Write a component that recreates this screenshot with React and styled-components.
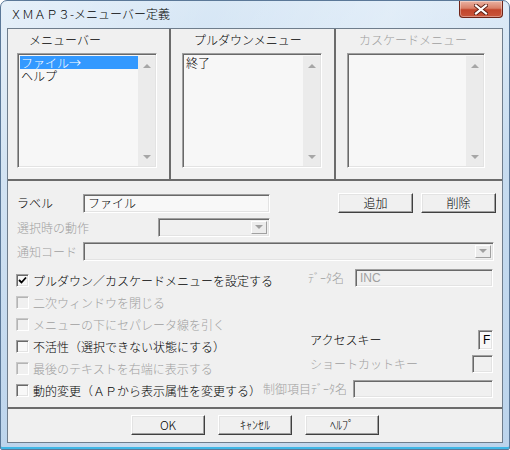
import React from 'react';
import styled, { createGlobalStyle } from 'styled-components';

const GlobalStyle = createGlobalStyle`
  html, body {
    margin: 0;
    padding: 0;
    background: #ffffff;
  }
  body {
    font-family: "Noto Sans CJK JP", "Noto Sans", sans-serif;
    font-size: 12px;
    font-weight: 300;
    color: #000;
  }
  * {
    box-sizing: border-box;
  }
`;

const Window = styled.div`
  width: 510px;
  height: 450px;
  display: flex;
  flex-direction: column;
  padding: 0 6px 6px 6px;
  border: 1px solid #5b7898;
  border-radius: 7px 7px 2px 2px;
  background:
    linear-gradient(115deg, rgba(255, 255, 255, 0.35) 0%, rgba(255, 255, 255, 0) 30%, rgba(255, 255, 255, 0.25) 55%, rgba(255, 255, 255, 0) 80%),
    linear-gradient(180deg, #d9e8f6 0%, #c6dbef 40%, #bcd4ec 100%);
  box-shadow: inset 0 -2px 0 #3fb7e6;
`;

const TitleBar = styled.div`
  height: 27px;
  display: flex;
  align-items: flex-start;
`;

const TitleText = styled.div`
  padding: 6px 0 0 3px;
  font-size: 12px;
  line-height: 14px;
  color: #000;
`;

const CloseButton = styled.div`
  margin-left: auto;
  width: 44px;
  height: 17px;
  display: flex;
  align-items: center;
  justify-content: center;
  border: 1px solid #6f2417;
  border-top: none;
  border-radius: 0 0 4px 4px;
  background: linear-gradient(180deg, #eab3a3 0%, #d98068 45%, #c2452b 55%, #c9553a 100%);
  box-shadow: inset 0 0 0 1px rgba(255, 255, 255, 0.35);
`;

const Client = styled.div`
  flex: 1;
  display: flex;
  flex-direction: column;
  border: 1px solid #6f7d8c;
  background: #f0f0f0;
`;

const ListSection = styled.div`
  height: 150px;
  display: grid;
  grid-template-columns: 161px 163px 166px;
  column-gap: 2px;
  background: #6b6b6b;
`;

const HDivider = styled.div`
  height: 2px;
  background: #6b6b6b;
`;

const ListColumn = styled.div`
  background: #f0f0f0;
  padding: 5px 0 0 ${(p) => p.$inset}px;
`;

const ColumnTitle = styled.div`
  margin-left: 12px;
  height: 12px;
  line-height: 12px;
  margin-bottom: 7px;
  color: ${(p) => (p.$disabled ? '#a0a0a0' : '#000')};
`;

const ListBox = styled.div`
  width: ${(p) => p.$w}px;
  height: 115px;
  display: flex;
  border: 1px solid;
  border-color: #a0a0a0 #ffffff #ffffff #a0a0a0;
  box-shadow: inset 1px 1px 0 #696969, inset -1px -1px 0 #e3e3e3;
  background: #f7f7f7;
  padding: 2px 1px 1px 2px;
`;

const ListItems = styled.div`
  flex: 1;
`;

const ListItem = styled.div`
  height: 13px;
  font-size: 12px;
  line-height: 13px;
  padding-left: 1px;
  white-space: nowrap;
  color: ${(p) => (p.$selected ? '#fff' : '#000')};
  background: ${(p) => (p.$selected ? '#3399ff' : 'transparent')};
`;

const ScrollTrack = styled.div`
  width: 17px;
  display: flex;
  flex-direction: column;
  justify-content: space-between;
  align-items: center;
  padding: 8px 0 7px;
  background: #ebebeb;
`;

const Arrow = styled.div`
  width: 0;
  height: 0;
  border-left: 4px solid transparent;
  border-right: 4px solid transparent;
  ${(p) => (p.$up ? 'border-bottom' : 'border-top')}: 4px solid #a6a6a6;
`;

const FormSection = styled.div`
  height: 226px;
  padding: 12px 0 0 9px;
  display: flex;
  flex-direction: column;
`;

const FormRow = styled.div`
  display: flex;
  align-items: center;
  height: ${(p) => p.$h}px;
  margin-bottom: ${(p) => p.$mb || 0}px;
`;

const FieldLabel = styled.div`
  width: ${(p) => (p.$w ? `${p.$w}px` : 'auto')};
  flex: none;
  white-space: nowrap;
  line-height: 12px;
  color: ${(p) => (p.$disabled ? '#a0a0a0' : '#000')};
`;

const TextBox = styled.div`
  width: ${(p) => p.$w}px;
  height: ${(p) => p.$h}px;
  flex: none;
  border: 1px solid;
  border-color: #a0a0a0 #ffffff #ffffff #a0a0a0;
  box-shadow: inset 1px 1px 0 #696969, inset -1px -1px 0 #e3e3e3;
  background: ${(p) => (p.$disabled ? '#f0f0f0' : '#f8f8f8')};
  padding: 0 2px 0 4px;
  display: flex;
  align-items: center;
  line-height: 12px;
  color: ${(p) => (p.$disabled ? '#a0a0a0' : '#000')};
  font-family: ${(p) => (p.$latin ? '"Liberation Sans", sans-serif' : 'inherit')};
  font-weight: ${(p) => (p.$latin ? 400 : 300)};
`;

const ComboBox = styled(TextBox)`
  justify-content: flex-end;
  padding: 2px;
  background: #f0f0f0;
`;

const ComboButton = styled.div`
  width: 16px;
  height: 100%;
  display: flex;
  align-items: center;
  justify-content: center;
  border: 1px solid;
  border-color: #ffffff #a0a0a0 #a0a0a0 #ffffff;
  background: #ececec;
`;

const PushButton = styled.button`
  width: ${(p) => p.$w || 75}px;
  height: 20px;
  padding: 0;
  font-family: inherit;
  font-size: 12px;
  font-weight: 300;
  line-height: 12px;
  color: #000;
  background: #f0f0f0;
  border: 1px solid;
  border-color: #ffffff #404040 #404040 #ffffff;
  box-shadow: inset -1px -1px 0 #a0a0a0, inset 1px 1px 0 #e3e3e3;
`;

const ButtonGroup = styled.div`
  margin-left: auto;
  margin-right: 6px;
  display: flex;
  gap: 8px;
`;

const OptionsArea = styled.div`
  display: grid;
  grid-template-columns: 246px 230px;
  margin-top: 8px;
`;

const CheckList = styled.div`
  display: flex;
  flex-direction: column;
`;

const CheckRow = styled.label`
  height: 22px;
  display: flex;
  align-items: center;
  gap: 4px;
  margin-left: -1px;
  white-space: nowrap;
  color: ${(p) => (p.$disabled ? '#a0a0a0' : '#000')};
`;

const CheckBox = styled.span`
  width: 13px;
  height: 13px;
  flex: none;
  display: flex;
  align-items: center;
  justify-content: center;
  border: 1px solid;
  border-color: ${(p) => (p.$disabled ? '#c8c8c8 #ffffff #ffffff #c8c8c8' : '#a0a0a0 #ffffff #ffffff #a0a0a0')};
  box-shadow: ${(p) =>
    p.$disabled ? 'inset 1px 1px 0 #b4b4b4' : 'inset 1px 1px 0 #696969, inset -1px -1px 0 #e3e3e3'};
  background: ${(p) => (p.$disabled ? '#f0f0f0' : '#f8f8f8')};
`;

const SideFields = styled.div`
  display: flex;
  flex-direction: column;
`;

const SideRow = styled.div`
  height: ${(p) => p.$h}px;
  margin-top: ${(p) => p.$mt || 0}px;
  padding-left: ${(p) => p.$pl || 0}px;
  display: flex;
  align-items: center;
  justify-content: space-between;
`;

const ButtonBar = styled.div`
  flex: 1;
  display: flex;
  justify-content: center;
  align-items: flex-start;
  padding-top: 6px;
  gap: 13px;
`;

const ScrollList = ({ w, items = [] }) => (
  <ListBox $w={w}>
    <ListItems>
      {items.map((it) => (
        <ListItem key={it.text} $selected={it.selected}>
          {it.text}
        </ListItem>
      ))}
    </ListItems>
    <ScrollTrack>
      <Arrow $up />
      <Arrow />
    </ScrollTrack>
  </ListBox>
);

const DownArrow = () => (
  <svg width="8" height="5" viewBox="0 0 8 5">
    <path d="M0 0 L8 0 L4 4 Z" fill="#a0a0a0" />
  </svg>
);

const Check = () => (
  <svg width="9" height="9" viewBox="0 0 9 9">
    <path d="M1 4 L3.5 6.5 L8 1.5" fill="none" stroke="#000" strokeWidth="1.8" />
  </svg>
);

const Option = ({ checked, disabled, children }) => (
  <CheckRow $disabled={disabled}>
    <CheckBox $disabled={disabled}>{checked && <Check />}</CheckBox>
    {children}
  </CheckRow>
);

export default function App() {
  return (
    <>
      <GlobalStyle />
      <Window>
        <TitleBar>
          <TitleText>ＸＭＡＰ３-メニューバー定義</TitleText>
          <CloseButton>
            <svg width="14" height="11" viewBox="0 0 14 11">
              <path d="M2 1.5 L12 9.5 M12 1.5 L2 9.5" stroke="#5a1d12" strokeWidth="4" strokeLinecap="square" />
              <path d="M2 1.5 L12 9.5 M12 1.5 L2 9.5" stroke="#ffffff" strokeWidth="2.2" strokeLinecap="square" />
            </svg>
          </CloseButton>
        </TitleBar>
        <Client>
          <ListSection>
            <ListColumn $inset={9}>
              <ColumnTitle>メニューバー</ColumnTitle>
              <ScrollList
                w={140}
                items={[
                  { text: 'ファイル→', selected: true },
                  { text: 'ヘルプ' },
                ]}
              />
            </ListColumn>
            <ListColumn $inset={11}>
              <ColumnTitle>プルダウンメニュー</ColumnTitle>
              <ScrollList w={140} items={[{ text: '終了' }]} />
            </ListColumn>
            <ListColumn $inset={11}>
              <ColumnTitle $disabled>カスケードメニュー</ColumnTitle>
              <ScrollList w={138} />
            </ListColumn>
          </ListSection>
          <HDivider />
          <FormSection>
            <FormRow $h={20} $mb={5}>
              <FieldLabel $w={66}>ラベル</FieldLabel>
              <TextBox $w={187} $h={19}>ファイル</TextBox>
              <ButtonGroup>
                <PushButton>追加</PushButton>
                <PushButton>削除</PushButton>
              </ButtonGroup>
            </FormRow>
            <FormRow $h={19} $mb={5}>
              <FieldLabel $w={141} $disabled>選択時の動作</FieldLabel>
              <ComboBox $w={112} $h={19}>
                <ComboButton>
                  <DownArrow />
                </ComboButton>
              </ComboBox>
            </FormRow>
            <FormRow $h={19}>
              <FieldLabel $w={66} $disabled>通知コード</FieldLabel>
              <ComboBox $w={411} $h={19}>
                <ComboButton>
                  <DownArrow />
                </ComboButton>
              </ComboBox>
            </FormRow>
            <OptionsArea>
              <CheckList>
                <Option checked>プルダウン／カスケードメニューを設定する</Option>
                <Option disabled>二次ウィンドウを閉じる</Option>
                <Option disabled>メニューの下にセパレータ線を引く</Option>
                <Option>不活性（選択できない状態にする）</Option>
                <Option disabled>最後のテキストを右端に表示する</Option>
                <Option>動的変更（ＡＰから表示属性を変更する）</Option>
              </CheckList>
              <SideFields>
                <SideRow $h={18} $pl={45}>
                  <FieldLabel $disabled>ﾃﾞｰﾀ名</FieldLabel>
                  <TextBox $w={138} $h={18} $disabled $latin>INC</TextBox>
                </SideRow>
                <SideRow $h={20} $mt={43} $pl={47}>
                  <FieldLabel>アクセスキー</FieldLabel>
                  <TextBox $w={15} $h={20} $latin>F</TextBox>
                </SideRow>
                <SideRow $h={18} $mt={5} $pl={47}>
                  <FieldLabel $disabled>ショートカットキー</FieldLabel>
                  <TextBox $w={21} $h={18} $disabled />
                </SideRow>
                <SideRow $h={18} $mt={7}>
                  <FieldLabel $disabled>制御項目ﾃﾞｰﾀ名</FieldLabel>
                  <TextBox $w={140} $h={18} $disabled />
                </SideRow>
              </SideFields>
            </OptionsArea>
          </FormSection>
          <HDivider />
          <ButtonBar>
            <PushButton $w={74}>OK</PushButton>
            <PushButton $w={74}>ｷｬﾝｾﾙ</PushButton>
            <PushButton $w={74}>ﾍﾙﾌﾟ</PushButton>
          </ButtonBar>
        </Client>
      </Window>
    </>
  );
}
